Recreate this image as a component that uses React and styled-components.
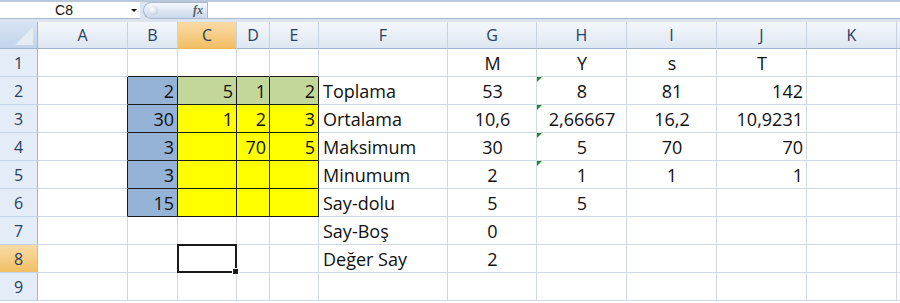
import React from "react";
import styled, { createGlobalStyle, css } from "styled-components";

const GlobalStyle = createGlobalStyle`
  html, body { margin: 0; padding: 0; background: #ffffff; }
  body { font-family: "Open Sans", "Lato", sans-serif; }
  * { box-sizing: border-box; }
`;

const Window = styled.div`
  width: 900px;
  height: 303px;
  overflow: hidden;
  background: #ffffff;
  display: flex;
  flex-direction: column;
`;

const FormulaBar = styled.div`
  height: 22px;
  display: flex;
  align-items: flex-start;
  background: #dbe4ef;
  border-top: 2px solid #b9c8da;
`;

const NameBox = styled.div`
  width: 140px;
  height: 17px;
  background: #ffffff;
  border-bottom: 1px solid #a9b8cc;
  display: flex;
  align-items: center;
  font-family: "Liberation Sans", Arial, sans-serif;
  font-size: 14px;
  color: #111;
`;

const NameText = styled.span`
  width: 128px;
  text-align: center;
`;

const DropArrow = styled.span`
  width: 0;
  height: 0;
  border-left: 3px solid transparent;
  border-right: 3px solid transparent;
  border-top: 3px solid #111;
  margin-left: 3px;
`;

const FxPill = styled.div`
  width: 64px;
  height: 17px;
  margin-left: 3px;
  border: 1px solid #a9b8cc;
  border-right: none;
  border-radius: 9px 0 0 9px;
  background: linear-gradient(to bottom, #f6f9fd 0%, #dbe5f2 55%, #cbd9ec 100%);
  display: flex;
  align-items: center;
  justify-content: space-between;
  padding: 0 4px 0 5px;
`;

const Grip = styled.span`
  width: 9px;
  height: 9px;
  border-radius: 50%;
  background: radial-gradient(circle at 35% 35%, #ffffff 0%, #c9d4e2 70%, #aab8ca 100%);
`;

const FxLabel = styled.span`
  font-family: "Liberation Serif", "Times New Roman", serif;
  font-style: italic;
  font-weight: bold;
  font-size: 12px;
  color: #555c66;
`;

const FormulaInput = styled.div`
  flex: 1;
  height: 17px;
  background: #ffffff;
  border-left: 1px solid #a9b8cc;
  border-bottom: 1px solid #a9b8cc;
`;

const Sheet = styled.div`
  display: grid;
  grid-template-columns: 38px 90px 50px 59px 33px 49px 129px 89px 90px 90px 90px 90px 1fr;
  grid-template-rows: 27px repeat(9, 28px);
`;

const Corner = styled.div`
  position: relative;
  background: linear-gradient(to bottom, #d7e3f3, #c2d4ec);
  border-right: 1px solid #9eb6ce;
  border-bottom: 1px solid #9eb6ce;
  &::after {
    content: "";
    position: absolute;
    right: 4px;
    bottom: 3px;
    width: 0;
    height: 0;
    border-left: 18px solid transparent;
    border-bottom: 18px solid #e6ecf4;
  }
`;

const headActive = "linear-gradient(to bottom, #f9dba6 0%, #f6cd86 50%, #f1bf64 100%)";

const ColHead = styled.div`
  display: flex;
  align-items: center;
  justify-content: center;
  font-size: 16px;
  color: #27405f;
  border-right: 1px solid #c5d2e2;
  border-bottom: 1px solid #9eb6ce;
  background: ${(p) =>
    p.$active ? headActive : "linear-gradient(to bottom, #f4f7fb 0%, #e9eff7 50%, #dde6f1 100%)"};
  ${(p) => p.$active && css`border-bottom-color: #f2b84f;`}
`;

const RowHead = styled.div`
  display: flex;
  align-items: center;
  justify-content: center;
  font-size: 16px;
  color: #27405f;
  border-right: 1px solid #9eb6ce;
  border-bottom: 1px solid #c5d2e2;
  background: ${(p) => (p.$active ? headActive : "#e4ecf7")};
  ${(p) => p.$active && css`border-right-color: #f2b84f;`}
`;

const Cell = styled.div`
  position: relative;
  display: flex;
  align-items: center;
  padding: 1px 3px 0 4px;
  font-size: 18px;
  color: #111;
  white-space: nowrap;
  background: ${(p) => p.$bg || "#ffffff"};
  border-right: 1px solid ${(p) => p.$rb || "#d0d7e5"};
  border-bottom: 1px solid ${(p) => p.$bb || "#d0d7e5"};
  justify-content: ${(p) =>
    p.$align === "right" ? "flex-end" : p.$align === "center" ? "center" : "flex-start"};
  ${(p) =>
    p.$selected &&
    css`
      &::before {
        content: "";
        position: absolute;
        left: -1px;
        top: -1px;
        right: -1px;
        bottom: -1px;
        border: 2.5px solid #1a1a1a;
        z-index: 2;
      }
      &::after {
        content: "";
        position: absolute;
        right: -3px;
        bottom: -3px;
        width: 5px;
        height: 5px;
        background: #1a1a1a;
        border: 1px solid #ffffff;
        z-index: 3;
      }
    `}
`;

const Flag = styled.span`
  position: absolute;
  left: 0;
  top: 0;
  width: 0;
  height: 0;
  border-top: 5px solid #1c8a2a;
  border-right: 5px solid transparent;
`;

const BLUE = "#95b3d7";
const GREEN = "#c4d79b";
const YELLOW = "#ffff00";
const BLACK = "#1a1a1a";

const COLS = ["A", "B", "C", "D", "E", "F", "G", "H", "I", "J", "K", ""];

const ROWS = [
  { 6: { v: "M", a: "center" }, 7: { v: "Y", a: "center" }, 8: { v: "s", a: "center" }, 9: { v: "T", a: "center" } },
  {
    1: { v: "2", a: "right", bg: BLUE }, 2: { v: "5", a: "right", bg: GREEN }, 3: { v: "1", a: "right", bg: GREEN }, 4: { v: "2", a: "right", bg: GREEN },
    5: { v: "Toplama" }, 6: { v: "53", a: "center" }, 7: { v: "8", a: "center", flag: true }, 8: { v: "81", a: "center" }, 9: { v: "142", a: "right" },
  },
  {
    1: { v: "30", a: "right", bg: BLUE }, 2: { v: "1", a: "right", bg: YELLOW }, 3: { v: "2", a: "right", bg: YELLOW }, 4: { v: "3", a: "right", bg: YELLOW },
    5: { v: "Ortalama" }, 6: { v: "10,6", a: "center" }, 7: { v: "2,66667", a: "center", flag: true }, 8: { v: "16,2", a: "center" }, 9: { v: "10,9231", a: "right" },
  },
  {
    1: { v: "3", a: "right", bg: BLUE }, 2: { v: "", a: "right", bg: YELLOW }, 3: { v: "70", a: "right", bg: YELLOW }, 4: { v: "5", a: "right", bg: YELLOW },
    5: { v: "Maksimum" }, 6: { v: "30", a: "center" }, 7: { v: "5", a: "center", flag: true }, 8: { v: "70", a: "center" }, 9: { v: "70", a: "right" },
  },
  {
    1: { v: "3", a: "right", bg: BLUE }, 2: { v: "", bg: YELLOW }, 3: { v: "", bg: YELLOW }, 4: { v: "", bg: YELLOW },
    5: { v: "Minumum" }, 6: { v: "2", a: "center" }, 7: { v: "1", a: "center", flag: true }, 8: { v: "1", a: "center" }, 9: { v: "1", a: "right" },
  },
  {
    1: { v: "15", a: "right", bg: BLUE }, 2: { v: "", bg: YELLOW }, 3: { v: "", bg: YELLOW }, 4: { v: "", bg: YELLOW },
    5: { v: "Say-dolu" }, 6: { v: "5", a: "center" }, 7: { v: "5", a: "center" },
  },
  { 5: { v: "Say-Boş" }, 6: { v: "0", a: "center" } },
  { 5: { v: "Değer Say" }, 6: { v: "2", a: "center" } },
  {},
];

const SELECTED = { row: 7, col: 2 };

const inBlock = (r, c) => r >= 1 && r <= 5 && c >= 1 && c <= 4;

export default function App() {
  return (
    <Window>
      <GlobalStyle />
      <FormulaBar>
        <NameBox>
          <NameText>C8</NameText>
          <DropArrow />
        </NameBox>
        <FxPill>
          <Grip />
          <FxLabel>fx</FxLabel>
        </FxPill>
        <FormulaInput />
      </FormulaBar>
      <Sheet>
        <Corner />
        {COLS.map((c, i) => (
          <ColHead key={"h" + i} $active={i === SELECTED.col}>
            {c}
          </ColHead>
        ))}
        {ROWS.map((row, r) => (
          <React.Fragment key={"r" + r}>
            <RowHead $active={r === SELECTED.row}>{r + 1}</RowHead>
            {COLS.map((_, c) => {
              const d = row[c] || {};
              const rb = inBlock(r, c) || inBlock(r, c + 1) ? BLACK : undefined;
              const bb = inBlock(r, c) || inBlock(r + 1, c) ? BLACK : undefined;
              return (
                <Cell
                  key={c}
                  $bg={d.bg}
                  $align={d.a}
                  $rb={rb}
                  $bb={bb}
                  $selected={r === SELECTED.row && c === SELECTED.col}
                >
                  {d.flag && <Flag />}
                  {d.v}
                </Cell>
              );
            })}
          </React.Fragment>
        ))}
      </Sheet>
    </Window>
  );
}
